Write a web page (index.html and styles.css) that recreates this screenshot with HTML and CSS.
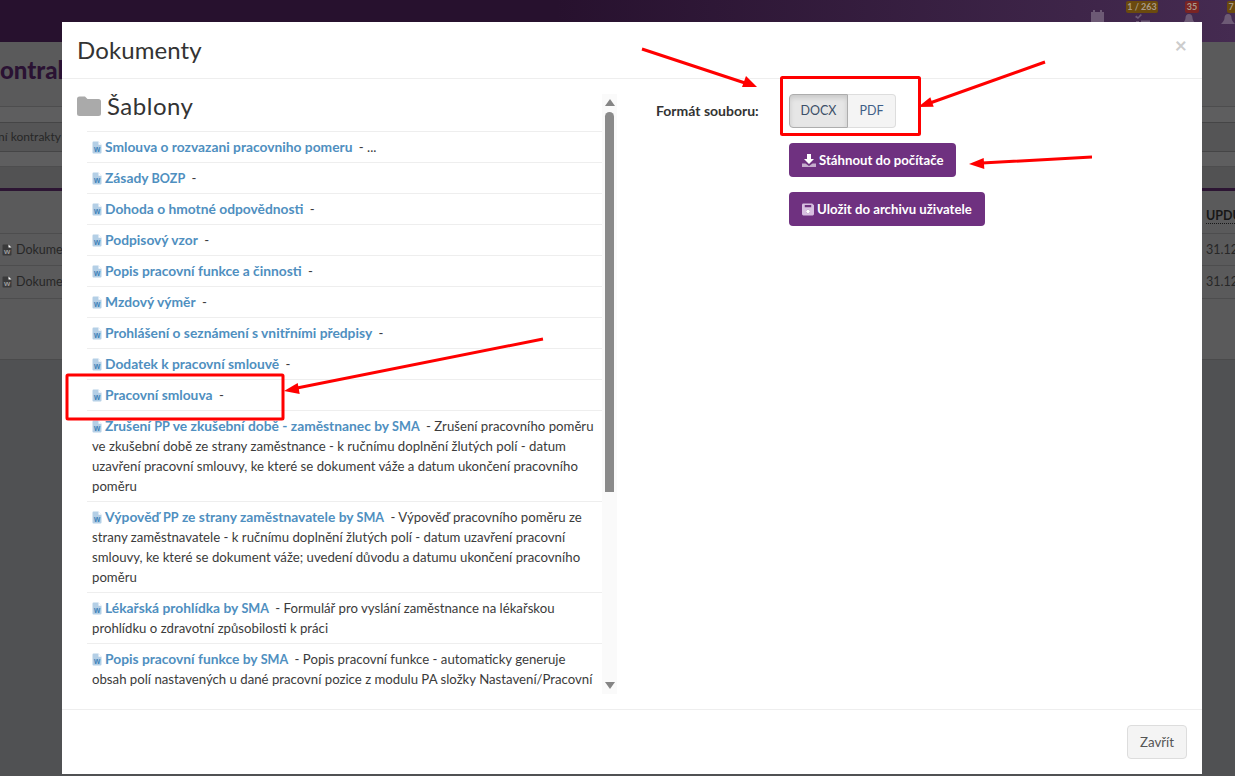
FILE: index.html
```html
<!DOCTYPE html>
<html lang="cs">
<head>
<meta charset="utf-8">
<title>Dokumenty</title>
<link rel="stylesheet" href="styles.css">
</head>
<body>
<svg class="defs" width="0" height="0">
  <symbol id="word" viewBox="0 0 10 12" preserveAspectRatio="none">
    <path d="M0.500 1.500a1 1 0 0 1 1-1H6.500L9.500 3.500V10.500a1 1 0 0 1-1 1H1.500a1 1 0 0 1-1-1z" fill="currentColor"/>
    <path d="M6.500 0.500V3.500H9.500z" fill="#fff"/>
    <text x="5" y="10.300" text-anchor="middle" font-size="8" font-weight="700" font-family="Liberation Sans, sans-serif" style="fill: var(--w)">w</text>
  </symbol>
</svg>
<div class="page">
  <header class="topbar">
    <div class="tb-item tb-cal"><svg width="13" height="14" viewBox="0 0 13 14"><path d="M0 3h13v11H0zM2 1h2v3H2zM9 1h2v3H9z" fill="#6d5a75"/></svg></div>
    <div class="tb-item tb-tasks">
      <span class="badge badge-amber">1 / 263</span>
      <svg class="tb-ico" width="15" height="12" viewBox="0 0 15 12"><path d="M0 3l1.500-1.500L3 3l2.500-3L7 1 3 5zM6 6.500h9v2H6zM1 7h3v3H1zM6 10.500h9V12H6z" fill="#6d5a75"/></svg>
    </div>
    <div class="tb-item tb-alert">
      <span class="badge badge-red">35</span>
      <svg class="tb-bell" width="14" height="10" viewBox="0 0 14 10"><path d="M7 0c2.500 0 3.500 2 3.500 4s1.500 4 3.500 6H0c2-2 3.500-4 3.500-6S4.500 0 7 0z" fill="#6d5a75"/></svg>
    </div>
    <div class="tb-item tb-last">
      <span class="badge badge-amber">7</span>
      <svg class="tb-bell" width="14" height="10" viewBox="0 0 14 10"><path d="M7 0c2.500 0 3.500 2 3.500 4s1.500 4 3.500 6H0c2-2 3.500-4 3.500-6S4.500 0 7 0z" fill="#6d5a75"/></svg>
    </div>
  </header>
  <div class="band band-title"><span class="page-title">ontrakty</span></div>
  <div class="band band-gap"></div>
  <div class="band band-filter"><span class="filter-text">ní kontrakty</span></div>
  <div class="band band-gap2"></div>
  <div class="band band-tabs"></div>
  <div class="band band-head"><span class="th">UPDU</span></div>
  <div class="band band-row band-row-first"><span class="cell"><svg class="doc"><use href="#word"/></svg>Dokumen</span><span class="date">31.12</span></div>
  <div class="band band-row"><span class="cell"><svg class="doc"><use href="#word"/></svg>Dokumen</span><span class="date">31.12</span></div>
  <div class="band band-rest"></div>
</div>

<section class="modal">
  <div class="modal-head">
    <h1 class="modal-title">Dokumenty</h1>
    <span class="close">×</span>
  </div>
  <div class="modal-body">
    <div class="left">
      <div class="scroller">
        <h2 class="folder">
          <svg width="24" height="20" viewBox="0 0 24 20"><path d="M0 3a2.500 2.500 0 0 1 2.500-2.500H8L10.500 3H21.500A2.500 2.500 0 0 1 24 5.500V17.500A2.500 2.500 0 0 1 21.500 20H2.500A2.500 2.500 0 0 1 0 17.500z" fill="#aaa"/></svg>
          Šablony
        </h2>
        <ul class="docs">
          <li><a href="#"><svg class="ico"><use href="#word"/></svg>Smlouva o rozvazani pracovniho pomeru</a><span class="desc"> - ...</span></li>
          <li><a href="#"><svg class="ico"><use href="#word"/></svg>Zásady <span class="ac">BOZP</span></a><span class="desc"> -</span></li>
          <li><a href="#"><svg class="ico"><use href="#word"/></svg>Dohoda o hmotné odpovědnosti</a><span class="desc"> -</span></li>
          <li><a href="#"><svg class="ico"><use href="#word"/></svg>Podpisový vzor</a><span class="desc"> -</span></li>
          <li><a href="#"><svg class="ico"><use href="#word"/></svg>Popis pracovní funkce a činnosti</a><span class="desc"> -</span></li>
          <li><a href="#"><svg class="ico"><use href="#word"/></svg>Mzdový výměr</a><span class="desc"> -</span></li>
          <li><a href="#"><svg class="ico"><use href="#word"/></svg>Prohlášení o seznámení s vnitřními předpisy</a><span class="desc"> -</span></li>
          <li><a href="#"><svg class="ico"><use href="#word"/></svg>Dodatek k pracovní smlouvě</a><span class="desc"> -</span></li>
          <li><a href="#"><svg class="ico"><use href="#word"/></svg>Pracovní smlouva</a><span class="desc"> -</span></li>
          <li><a href="#"><svg class="ico"><use href="#word"/></svg>Zrušení <span class="ac">PP</span> ve zkušební době - zaměstnanec by <span class="ac">SMA</span></a><span class="desc"> - Zrušení pracovního poměru ve zkušební době ze strany zaměstnance - k ručnímu doplnění žlutých polí - datum uzavření pracovní smlouvy, ke které se dokument váže a datum ukončení pracovního poměru</span></li>
          <li><a href="#"><svg class="ico"><use href="#word"/></svg>Výpověď <span class="ac">PP</span> ze strany zaměstnavatele by <span class="ac">SMA</span></a><span class="desc"> - Výpověď pracovního poměru ze strany zaměstnavatele - k ručnímu doplnění žlutých polí - datum uzavření pracovní smlouvy, ke které se dokument váže; uvedení důvodu a datumu ukončení pracovního poměru</span></li>
          <li><a href="#"><svg class="ico"><use href="#word"/></svg>Lékařská prohlídka by <span class="ac">SMA</span></a><span class="desc"> - Formulář pro vyslání zaměstnance na lékařskou prohlídku o zdravotní způsobilosti k práci</span></li>
          <li><a href="#"><svg class="ico"><use href="#word"/></svg>Popis pracovní funkce by <span class="ac">SMA</span></a><span class="desc"> - Popis pracovní funkce - automaticky generuje obsah polí nastavených u dané pracovní pozice z modulu PA složky Nastavení/Pracovní</span></li>
        </ul>
      </div>
      <div class="scrollbar">
        <span class="arrow-up"></span>
        <span class="thumb"></span>
        <span class="arrow-down"></span>
      </div>
    </div>
    <div class="right">
      <div class="format">
        <span class="format-label">Formát souboru:</span>
        <div class="toggle">
          <button class="tg tg-on">DOCX</button>
          <button class="tg tg-off">PDF</button>
        </div>
      </div>
      <div class="actions">
        <button class="primary">
          <svg width="14" height="13" viewBox="0 0 14 13"><path d="M5 0h4v5h3L7 10 2 5h3z" fill="#fff"/><path d="M0 9.500h3.500L7 12l3.500-2.500H14V13H0z" fill="#fff" opacity=".6"/></svg>
          Stáhnout do počítače
        </button>
        <button class="primary">
          <svg width="12" height="13" viewBox="0 0 13 13"><path fill-rule="evenodd" d="M1.500 0H11l2 2v9.500a1.500 1.500 0 0 1-1.500 1.500h-10A1.500 1.500 0 0 1 0 11.500v-10A1.500 1.500 0 0 1 1.500 0zM3 1.500V4h7V1.500zM6.500 6.500a2 2 0 1 0 0 4 2 2 0 0 0 0-4z" fill="#d7bfe0"/><circle cx="6.500" cy="8.500" r="2" fill="#fff"/></svg>
          Uložit do archivu uživatele
        </button>
      </div>
    </div>
  </div>
  <div class="modal-foot">
    <button class="close-btn">Zavřít</button>
  </div>
</section>

<svg class="marks" width="1235" height="776" viewBox="0 0 1235 776">
  <g fill="none" stroke="#f00" stroke-width="3">
    <rect x="781.500" y="77.500" width="138" height="57" rx="1"/>
    <rect x="67" y="375" width="216" height="44" rx="1"/>
    <path d="M642 49L745 83M1045 62L930 103M1092 157L982 163M543 339L297 388"/>
  </g>
  <g fill="#f00">
    <polygon points="757,87 742,87 746,76"/>
    <polygon points="918,107 933.700,106.700 930.300,97.300"/>
    <polygon points="969,164 984.300,169 983.700,158"/>
    <polygon points="284,391 299.700,393.900 297.700,383.100"/>
  </g>
</svg>
</body>
</html>
```
FILE: styles.css
```css
* { box-sizing: border-box; }
html, body { margin: 0; height: 776px; overflow: hidden; }
body {
  position: relative;
  background: #505153;
  font-family: "Lato", "Noto Sans", sans-serif;
  font-size: 14px;
  line-height: 20px;
  color: #3b3b3b;
}
.defs { position: absolute; }

/* page under the dialog */
.page { height: 776px; display: flex; flex-direction: column; color: #272727; white-space: nowrap; font-size: 12.5px; }
.topbar {
  height: 42px; flex: none; display: flex; justify-content: flex-end; align-items: flex-start; overflow: hidden;
  background: linear-gradient(90deg, #27112e 0, #27112e 45%, #452b51 100%);
}
.tb-item { padding-top: 1px; display: flex; flex-direction: column; align-items: center; gap: 1px; }
.tb-cal { margin-right: 22px; padding-top: 9px; }
.tb-tasks { margin-right: 27px; }
.tb-alert { margin-right: 28px; }
.tb-last { width: 8px; }
.tb-bell { margin-left: -6px; }
.badge { display: block; width: 32px; height: 12px; text-align: center; line-height: 12px; font-size: 9px; font-weight: 700; color: #a89a88; border-radius: 2px; }
.badge-amber { background: #6b4a0e; }
.badge-red { background: #7a2424; width: 14px; }
.tb-last .badge { width: 8px; border-radius: 2px 0 0 2px; }
.band { flex: none; display: flex; justify-content: space-between; align-items: center; background: #5a5a5b; }
.band-title { height: 65px; padding-bottom: 9px; border-bottom: 1px solid #4d4d4e; }
.page-title { font-size: 24px; font-weight: 900; color: #2a1233; }
.band-gap { height: 15px; background: #5e5e5f; }
.band-filter { height: 30px; border: 1px solid #454546; border-width: 1px 0; background: #555556; }
.filter-text { font-size: 12px; margin-left: -2px; }
.band-gap2 { height: 15px; background: #5e5e5f; border-bottom: 1px solid #4d4d4e; }
.band-tabs { height: 24px; background: #525253; border-bottom: 3px solid #2c1533; }
.band-head { height: 42px; justify-content: flex-end; padding: 9px 0 0 0; }
.th { width: 29px; overflow: hidden; font-weight: 700; color: #171717; border-bottom: 1px dotted #171717; line-height: 14px; }
.band-row { height: 33px; border-bottom: 1px solid #4d4d4e; }
.band-row-first { border-top: 1px solid #4d4d4e; }
.cell { display: flex; align-items: center; gap: 4px; padding-left: 2px; }
.doc { width: 10px; height: 12px; color: #3a3a3b; --w: #999; }
.date { width: 29px; overflow: hidden; }
.band-rest { height: 61px; border-bottom: 1px solid #4a4a4b; }

/* dialog */
.modal {
  position: absolute; left: 62px; top: 22px; width: 1140px; height: 752px;
  display: flex; flex-direction: column; background: #fff;
}
.modal-head { height: 57px; flex: none; display: flex; justify-content: space-between; align-items: center; padding: 0 15px; border-bottom: 1px solid #eee; }
.modal-title { margin: -1px 0 0; font-size: 24px; font-weight: 400; color: #333; letter-spacing: .1px; }
.close { font-size: 21px; font-weight: 700; color: #ccc; margin-top: -10px; }
.modal-body { flex: 1; min-height: 0; display: flex; padding: 15px; }
.left { width: 540px; flex: none; display: flex; }
.scroller { width: 525px; flex: none; overflow: hidden; }
.folder { margin: 0 0 13px; height: 24px; display: flex; align-items: center; gap: 6px; font-size: 24px; font-weight: 400; color: #333; line-height: 26px; letter-spacing: .5px; }
.docs { list-style: none; margin: 0 0 0 10px; padding: 0; }
.docs li { padding: 5px; border-top: 1px solid #eee; }
.docs a { color: #4f8fc0; font-size: 13.8px; line-height: 1; font-weight: 700; text-decoration: none; }
.ac { font-size: 12.6px; line-height: 1; }
.ico { width: 10px; height: 13px; margin: -4px 3px -4px 0; vertical-align: 2px; color: #b4cfe6; --w: #3f82b8; }
.desc { white-space: pre-wrap; margin-left: 3px; font-size: 13.2px; line-height: 1; }
.scrollbar { width: 15px; flex: none; display: flex; flex-direction: column; align-items: center; background: #fafafa; }
.arrow-up, .arrow-down { width: 0; height: 0; border: 5px solid transparent; }
.arrow-up { margin-top: 5px; border-top-width: 0; border-bottom: 7px solid #858585; }
.thumb { width: 9px; height: 380px; margin-top: 6px; background: #8a8a8a; border-radius: 5px 5px 0 0; }
.arrow-down { margin-top: auto; margin-bottom: 5px; border-bottom-width: 0; border-top: 7px solid #858585; }
.right { flex: 1; padding-left: 39px; }
.format { display: flex; align-items: center; }
.format-label { width: 133px; font-weight: 700; color: #333; }
.toggle { display: flex; }
.tg { height: 34px; font: inherit; font-size: 12.5px; margin: 0; color: #3c4f68; }
.tg-on { width: 59px; background: #e6e6e6; border: 1px solid #adadad; border-radius: 4px 0 0 4px; box-shadow: inset 0 3px 5px rgba(0,0,0,.125); }
.tg-off { width: 48px; background: #f4f4f4; border: 1px solid #ddd; border-left: 0; border-radius: 0 4px 4px 0; color: #3f5f87; }
.actions { margin: 15px 0 0 133px; display: flex; flex-direction: column; align-items: flex-start; gap: 15px; }
.primary { height: 34px; padding: 0 13px; display: flex; align-items: center; gap: 3px; font: inherit; font-size: 13.2px; font-weight: 700; color: #fff; background: #6f3180; border: 0; border-radius: 4px; }
.modal-foot { height: 65px; flex: none; display: flex; justify-content: flex-end; align-items: flex-start; padding: 15px; border-top: 1px solid #eee; }
.close-btn { width: 60px; height: 34px; font: inherit; font-size: 13.3px; color: #555; background: #f4f4f4; border: 1px solid #ddd; border-radius: 4px; }

/* red annotations drawn over the screenshot */
.marks { position: absolute; left: 0; top: 0; pointer-events: none; }
```
